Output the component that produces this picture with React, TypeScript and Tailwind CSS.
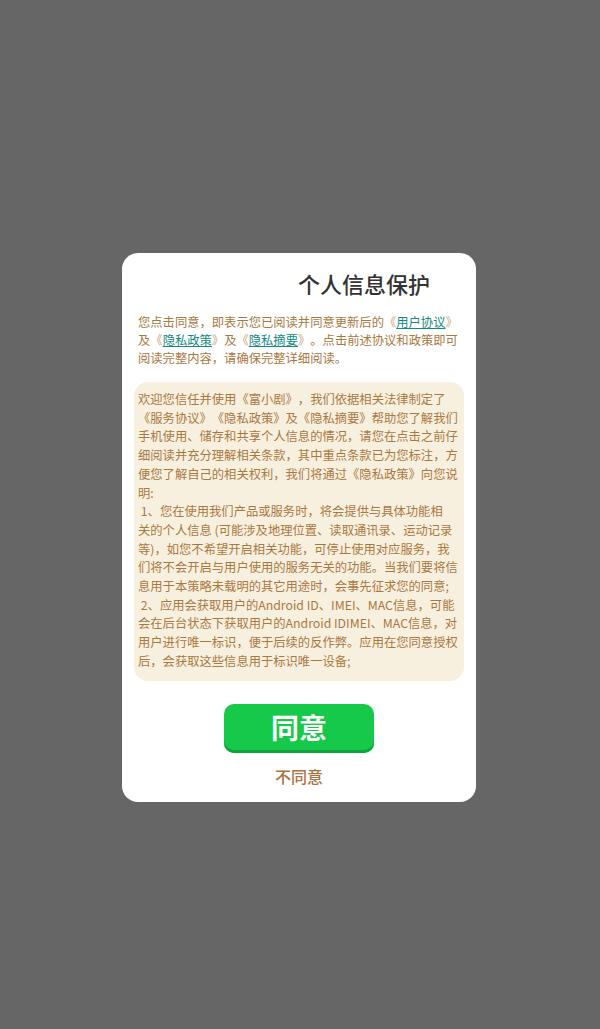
export default function App() {
  const font = { fontFamily: '"Noto Sans CJK SC", "Noto Sans", sans-serif' };
  const bk = "text-[#c9a67a]";
  return (
    <div className="min-h-[1029px] bg-[#666666] pt-[253px] [text-spacing-trim:space-all]" style={font}>
      <div className="mx-auto w-[354px] -translate-x-px rounded-[16px] bg-white pt-[15px] pb-[15px]">
        <h1 className="ml-[176px] text-[22px] leading-[30px] font-medium text-[#333333]">
          个人信息保护
        </h1>

        <p className="mt-[15px] px-4 text-[12.3px] leading-[18px] text-[#a8783f] whitespace-nowrap">
          您点击同意，即表示您已阅读并同意更新后的<span className={bk}>《</span>
          <span className="text-[#138a80] underline">用户协议</span>
          <span className={bk}>》</span>
          <br />
          及<span className={bk}>《</span>
          <span className="text-[#138a80] underline">隐私政策</span>
          <span className={bk}>》</span>及<span className={bk}>《</span>
          <span className="text-[#138a80] underline">隐私摘要</span>
          <span className={bk}>》</span>。点击前述协议和政策即可
          <br />
          阅读完整内容，请确保完整详细阅读。
        </p>

        <div className="mx-3 mt-[15px] rounded-[14px] bg-[#f8f0df] pt-[8px] pb-[10px] pl-1 text-[12.3px] leading-[18.7px] text-[#a8783f] whitespace-pre">
          {[
            "欢迎您信任并使用《富小剧》，我们依据相关法律制定了",
            "《服务协议》《隐私政策》及《隐私摘要》帮助您了解我们",
            "手机使用、储存和共享个人信息的情况，请您在点击之前仔",
            "细阅读并充分理解相关条款，其中重点条款已为您标注，方",
            "便您了解自己的相关权利，我们将通过《隐私政策》向您说",
            "明:",
            " 1、您在使用我们产品或服务时，将会提供与具体功能相",
            "关的个人信息 (可能涉及地理位置、读取通讯录、运动记录",
            "等)，如您不希望开启相关功能，可停止使用对应服务，我",
            "们将不会开启与用户使用的服务无关的功能。当我们要将信",
            "息用于本策略未载明的其它用途时，会事先征求您的同意;",
            " 2、应用会获取用户的Android ID、IMEI、MAC信息，可能",
            "会在后台状态下获取用户的Android IDIMEI、MAC信息，对",
            "用户进行唯一标识，便于后续的反作弊。应用在您同意授权",
            "后，会获取这些信息用于标识唯一设备;",
          ].map((line, i) => (
            <div key={i}>{line}</div>
          ))}
        </div>

        <div className="mt-[23px] flex justify-center">
          <button className="h-[49px] w-[150px] rounded-[10px] bg-[#17c94b] pb-[3px] text-[28px] leading-none font-bold text-white shadow-[inset_0_-3px_0_#0ea43a]">
            同意
          </button>
        </div>
        <div className="mt-[12px] text-center text-[16px] leading-[22px] font-medium text-[#a87440]">
          不同意
        </div>
      </div>
    </div>
  );
}
